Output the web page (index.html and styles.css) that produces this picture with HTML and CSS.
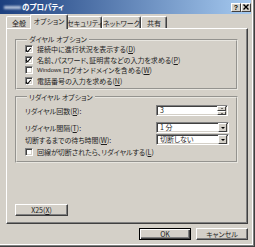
FILE: index.html
```html
<!DOCTYPE html>
<html lang="ja">
<head>
  <meta charset="UTF-8" />
  <title>のプロパティ</title>
  <link rel="stylesheet" href="styles.css">
</head>
<body>
  <div class="window">
    <div class="titlebar">
      <span class="title-name"></span>
      <span class="title">のプロパティ</span>
      <div class="title-btns">
        <span class="tbtn help">?</span>
        <span class="tbtn">
          <svg width="6" height="6" viewBox="0 0 6 6"><path d="M0.5 0.5L5.5 5.5M5.5 0.5L0.5 5.5" stroke="#000" stroke-width="1.4"/></svg>
        </span>
      </div>
    </div>

    <div class="content">
      <div class="tabs">
        <div class="tab t-general">全般</div>
        <div class="tab active t-option">オプション</div>
        <div class="tab t-security">セキュリティ</div>
        <div class="tab t-network">ネットワーク</div>
        <div class="tab t-share">共有</div>
      </div>

      <div class="panel">
        <fieldset class="group dial">
          <legend>ダイヤル オプション</legend>
          <label class="check-row"><span class="checkbox on"></span>接続中に進行状況を表示する(<u>D</u>)</label>
          <label class="check-row"><span class="checkbox on"></span>名前、パスワード、証明書などの入力を求める(<u>P</u>)</label>
          <label class="check-row"><span class="checkbox"></span><span class="latin">Windows</span>&nbsp;ログオン ドメインを含める(<u>W</u>)</label>
          <label class="check-row"><span class="checkbox on"></span>電話番号の入力を求める(<u>N</u>)</label>
        </fieldset>

        <fieldset class="group redial">
          <legend>リダイヤル オプション</legend>
          <div class="field-row r1">
            <span>リダイヤル回数(<u>R</u>):</span>
            <div class="spin">
              <span class="value">3</span>
              <span class="spin-btns"><span class="sb up"></span><span class="sb down"></span></span>
            </div>
          </div>
          <div class="field-row r2">
            <span>リダイヤル間隔(<u>T</u>):</span>
            <div class="combo"><span class="value">1 分</span><span class="drop"></span></div>
          </div>
          <div class="field-row r3">
            <span>切断するまでの待ち時間(<u>W</u>):</span>
            <div class="combo"><span class="value">切断しない</span><span class="drop"></span></div>
          </div>
          <label class="check-row r4"><span class="checkbox"></span>回線が切断されたら、リダイヤルする(<u>L</u>)</label>
        </fieldset>

        <button class="btn x25">X25(<u>X</u>)</button>
      </div>

      <div class="footer">
        <button class="btn default">OK</button>
        <button class="btn">キャンセル</button>
      </div>
    </div>
  </div>
</body>
</html>
```

FILE: styles.css
```css
* {
  box-sizing: border-box;
}
body {
  margin: 0;
  background: #fff;
  font-family: "Noto Sans CJK JP", "Liberation Sans", sans-serif;
  font-size: 7px;
  font-feature-settings: "palt";
  color: #1e1e1e;
}
u {
  text-decoration: underline;
}
.latin {
  font-family: "Liberation Sans", sans-serif;
  font-size: 6px;
}
.window {
  width: 255px;
  height: 247px;
  background: #d4d0c8;
  border-right: 1px solid #404040;
  border-bottom: 1px solid #404040;
  box-shadow: inset -1px -1px 0 #808080, inset -2px -2px 0 #fff;
  padding-right: 3px;
  padding-bottom: 3px;
}

/* title bar */
.titlebar {
  height: 14px;
  background: linear-gradient(to right, #1c3f7e, #a6caf0);
  display: flex;
  align-items: center;
  color: #fff;
}
.title-name {
  width: 17px;
  height: 3px;
  margin-left: 4px;
  margin-right: 1px;
  background: #b9c6dc;
  filter: blur(0.8px);
}
.title {
  font-size: 7.5px;
  font-weight: bold;
  line-height: 14px;
}
.title-btns {
  margin-left: auto;
  display: flex;
}
.tbtn {
  width: 10px;
  height: 9px;
  background: #d4d0c8;
  border-top: 1px solid #fff;
  border-left: 1px solid #fff;
  border-right: 1px solid #404040;
  border-bottom: 1px solid #404040;
  display: flex;
  align-items: center;
  justify-content: center;
  color: #000;
  font-family: "Liberation Sans", sans-serif;
  font-weight: bold;
  font-size: 7px;
  line-height: 7px;
}

/* body */
.content {
  padding: 0 3px 0 6px;
}
.tabs {
  height: 14px;
  display: flex;
  align-items: flex-end;
}
.tab {
  height: 12px;
  line-height: 11px;
  text-align: center;
  white-space: nowrap;
  border-top: 1px solid #fff;
  border-left: 1px solid #fff;
  border-right: 1px solid #404040;
  box-shadow: inset -1px 0 0 #808080;
  border-radius: 2px 2px 0 0;
  padding-top: 1px;
}
.t-general { width: 26px; }
.t-option { width: 38px; }
.t-security { width: 36px; }
.t-network { width: 39px; }
.t-share { width: 26px; }
.tab.active {
  height: 15px;
  margin: 0 -2px -1px;
  position: relative;
  z-index: 1;
  background: #d4d0c8;
}
.panel {
  height: 196px;
  border-top: 1px solid #fff;
  border-left: 1px solid #fff;
  border-right: 1px solid #404040;
  border-bottom: 1px solid #404040;
  box-shadow: inset -1px -1px 0 #808080;
  padding: 6px 9px 0 8px;
  display: flex;
  flex-direction: column;
}

/* group boxes */
.group {
  margin: 0;
  border: 2px groove #e8e6e0;
  padding: 0 4px 0 8px;
  min-width: 0;
}
.group legend {
  margin-left: 2px;
  padding: 0 2px;
  line-height: 9px;
}
.dial {
  padding-bottom: 1.5px;
}
.check-row {
  display: flex;
  align-items: center;
  height: 10.6px;
  white-space: nowrap;
}
.checkbox {
  width: 8px;
  height: 8px;
  margin-right: 4px;
  flex: none;
  background: #fff;
  border-top: 1px solid #808080;
  border-left: 1px solid #808080;
  border-right: 1px solid #fff;
  border-bottom: 1px solid #fff;
  box-shadow: inset 1px 1px 0 #404040, inset -1px -1px 0 #d4d0c8;
  position: relative;
}
.checkbox.on::after {
  content: "";
  position: absolute;
  left: 1px;
  top: 0.5px;
  width: 2px;
  height: 3.5px;
  border-right: 1.4px solid #000;
  border-bottom: 1.4px solid #000;
  transform: rotate(40deg);
}
.redial {
  margin-top: 3px;
  padding-top: 3.5px;
  padding-bottom: 4px;
}
.field-row {
  display: grid;
  grid-template-columns: 131px 73px;
  align-items: center;
  height: 11px;
  white-space: nowrap;
}
.r2 { margin-top: 6px; }
.r3 { margin-top: 1px; }
.r4 { margin-top: 2px; height: 10px; }

.spin, .combo {
  height: 11px;
  background: #fff;
  border-top: 1px solid #808080;
  border-left: 1px solid #808080;
  border-right: 1px solid #fff;
  border-bottom: 1px solid #fff;
  box-shadow: inset 1px 1px 0 #404040, inset -1px -1px 0 #d4d0c8;
  display: flex;
  align-items: center;
  padding: 1px;
}
.spin {
  width: 72px;
}
.value {
  flex: 1;
  padding-left: 2px;
  line-height: 9px;
}
.spin-btns {
  width: 9px;
  height: 9px;
  display: flex;
  flex-direction: column;
}
.sb {
  flex: 1;
  background: #d4d0c8;
  border-top: 1px solid #fff;
  border-left: 1px solid #fff;
  border-right: 1px solid #404040;
  border-bottom: 1px solid #404040;
  display: flex;
  align-items: center;
  justify-content: center;
}
.sb.up::after {
  content: "";
  border-left: 1.5px solid transparent;
  border-right: 1.5px solid transparent;
  border-bottom: 1.5px solid #000;
}
.sb.down::after {
  content: "";
  border-left: 1.5px solid transparent;
  border-right: 1.5px solid transparent;
  border-top: 1.5px solid #000;
}
.drop {
  width: 9px;
  height: 9px;
  background: #d4d0c8;
  border-top: 1px solid #fff;
  border-left: 1px solid #fff;
  border-right: 1px solid #404040;
  border-bottom: 1px solid #404040;
  display: flex;
  align-items: center;
  justify-content: center;
}
.drop::after {
  content: "";
  border-left: 2.5px solid transparent;
  border-right: 2.5px solid transparent;
  border-top: 2.5px solid #000;
}

/* buttons */
.btn {
  font: inherit;
  color: inherit;
  height: 12px;
  width: 52px;
  padding: 0;
  background: #d4d0c8;
  border-top: 1px solid #fff;
  border-left: 1px solid #fff;
  border-right: 1px solid #404040;
  border-bottom: 1px solid #404040;
  box-shadow: inset -1px -1px 0 #808080;
  line-height: 10px;
}
.x25 {
  width: 53px;
  margin-top: auto;
  margin-bottom: 7px;
}
.btn.default {
  border: 1px solid #000;
  box-shadow: inset 1px 1px 0 #fff, inset -1px -1px 0 #404040, inset -2px -2px 0 #808080;
}
.footer {
  display: flex;
  justify-content: flex-end;
  gap: 5px;
  padding-top: 4px;
}
```
